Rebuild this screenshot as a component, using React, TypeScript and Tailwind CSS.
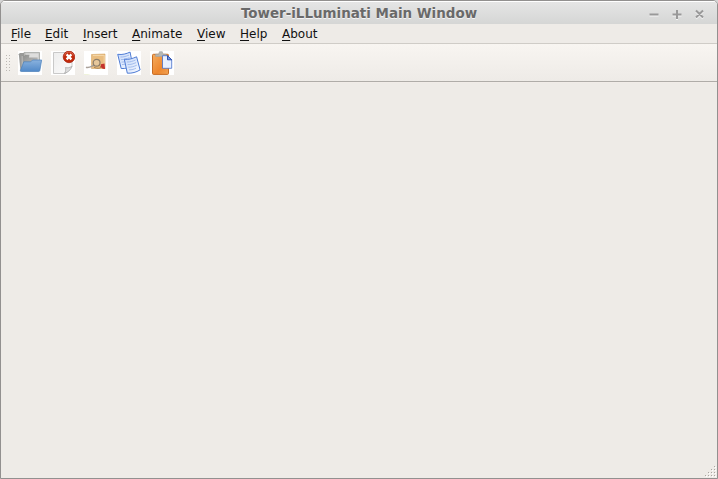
import type { ReactNode } from "react";

const menus = [
  { name: "File", width: "w-[34px]" },
  { name: "Edit", width: "w-[38px]" },
  { name: "Insert", width: "w-[49px]" },
  { name: "Animate", width: "w-[65px]" },
  { name: "View", width: "w-[43px]" },
  { name: "Help", width: "w-[42px]" },
  { name: "About", width: "w-[50px]" },
];

function Tile({ children }: { children: ReactNode }) {
  return (
    <div className="h-6 w-6 bg-white">
      <svg width="24" height="24" viewBox="0 0 24 24" className="block">
        {children}
      </svg>
    </div>
  );
}

function OpenIcon() {
  return (
    <Tile>
      <defs>
        <linearGradient id="folder" x1="0" y1="0" x2="0" y2="1">
          <stop offset="0" stopColor="#8ab2de" />
          <stop offset="1" stopColor="#5189c8" />
        </linearGradient>
        <linearGradient id="back" x1="0" y1="0" x2="1" y2="1">
          <stop offset="0" stopColor="#8c8d8b" />
          <stop offset="1" stopColor="#c9c9c8" />
        </linearGradient>
      </defs>
      <path d="M.8 3.2 1.8 2h5l1.5 1.5v16L2.5 20z" fill="#999a98" />
      <path d="M6 1.4h15.5v11H6z" fill="#c6c7c5" stroke="#989997" strokeWidth=".7" />
      <path d="M8 2.5h12.5v7H8z" fill="#dededd" />
      <path d="M4 4.8h2.5l1-1h4L11 6.5h8.7V14L4 18z" fill="url(#back)" />
      <path d="M4.2 5v12" fill="none" stroke="#d0d0cf" strokeWidth=".7" />
      <path d="M5.8 10.8h7l1.7-1.8h9.2l-1.8 10.3c-.1.7-.5 1.2-1.1 1.2H3.3c-.8 0-1-.4-.9-1z" fill="url(#folder)" stroke="#4a7fb9" strokeWidth=".7" />
    </Tile>
  );
}

function CloseFileIcon() {
  return (
    <Tile>
      <defs>
        <linearGradient id="page" x1="0" y1="0" x2="1" y2="1">
          <stop offset="0" stopColor="#ededed" />
          <stop offset="1" stopColor="#fcfcfc" />
        </linearGradient>
      </defs>
      <path d="M2.5 1.5h18.5V15.5L14.5 22.5h-12z" fill="url(#page)" stroke="#bdbdbd" strokeWidth=".8" />
      <path d="M13.5 22.3c1.5-2 1.4-4.2.9-5.8 2.2.7 4.6.1 6.4-1.2-.5 3.2-4 6.4-7.3 7z" fill="#dedede" stroke="#a3a3a3" strokeWidth=".7" />
      <circle cx="18" cy="5.9" r="5.8" fill="#c22a0b" stroke="#a51c0b" strokeWidth=".7" />
      <path d="M13.2 4.6a5 5 0 0 1 9.6 0" fill="none" stroke="#dc7864" strokeWidth=".7" />
      <path d="m15.6 3.4 4.8 5m0-5-4.8 5" stroke="#fff" strokeWidth="2.3" />
    </Tile>
  );
}

function InspectIcon() {
  return (
    <Tile>
      <path d="M7.5 3.5 21 3v14.5H7.5z" fill="#e9bd80" stroke="#d5a665" strokeWidth=".6" />
      <path d="M20.2 4v13.5M9 4.5h11" stroke="#f4d6a6" />
      <path d="M2 16.2c3.3 1.2 6-1.4 8.2-2" fill="none" stroke="#aaa19a" strokeWidth="1.6" />
      <circle cx="12.6" cy="11.8" r="3.4" fill="#e6c79b" stroke="#8c7e6a" strokeWidth="1.2" />
      <path d="M10 16.3c3.5 1.5 5.4 1.2 7 0M15 14l2 2.2" fill="none" stroke="#ae8754" />
      <path d="m16.9 13.3 3.6-.8.6 5.6-2.3-.4-2.1-1.8z" fill="#c4322c" />
      <path d="M0 23h4l3 .5H0z" fill="#dfe8b8" />
    </Tile>
  );
}

function CopyIcon() {
  return (
    <Tile>
      <defs>
        <linearGradient id="copy" x1="0" y1="0" x2="1" y2="1">
          <stop offset="0" stopColor="#c5d8fa" />
          <stop offset="1" stopColor="#f7faff" />
        </linearGradient>
      </defs>
      <path d="M.7 3.3c4.7.7 8.5-.5 12.4-2.2l2.5 13.2c-3.8 2.5-7 3.5-11.4 3.2z" fill="url(#copy)" stroke="#4f7cd4" />
      <path d="M3.5 6c3 .2 6-.8 8.5-1.9M4 8.6c3 .1 6-.9 8.5-2M4.5 11.1c2 .1 3.5-.3 5-.9M5 13.6l3-.4" fill="none" stroke="#94b1e8" strokeWidth=".8" />
      <path d="M7.3 8.2c4.9.7 8.3-.8 12.3-2.4l3.5 13.1c-4.1 2.4-7.8 3.5-12.8 3.3z" fill="url(#copy)" stroke="#4f7cd4" />
      <path d="M10 11c3 .2 6-.9 8.5-2M10.6 13.6c3 .2 6-.9 8.5-2M11.3 16.2c3 .2 6-.9 8.5-2M12 18.8c3 .2 5-.7 7-1.6" fill="none" stroke="#94b1e8" strokeWidth=".8" />
    </Tile>
  );
}

function PasteIcon() {
  return (
    <Tile>
      <defs>
        <linearGradient id="clipboard" x1="0" y1="0" x2="1" y2="1">
          <stop offset="0" stopColor="#f5ad60" />
          <stop offset=".6" stopColor="#ed872f" />
          <stop offset="1" stopColor="#f2a353" />
        </linearGradient>
      </defs>
      <rect x="2.5" y="3.3" width="16" height="20.1" rx="1" fill="url(#clipboard)" stroke="#c66c24" />
      <path d="M5.6 5.4V3.2h3L9.5.7h2.8l.7 2.5h3.2v2.2z" fill="#b5b7b5" stroke="#a0a2a0" strokeWidth=".6" />
      <path d="M12.5 4.7h5.2l4 4v8.6h-9.2z" fill="#e8f0ff" stroke="#456fca" strokeWidth=".8" />
      <path d="M17.5 4.8v4h4.2z" fill="#7b9fe8" stroke="#2146a8" strokeWidth=".9" />
    </Tile>
  );
}

function WindowControls() {
  return (
    <svg width="60" height="12" viewBox="0 0 60 12" className="mr-[10px]" fill="none" strokeWidth="2">
      <path d="M2.5 7.5h9M25.5 7.5h9M30 3v9M49 3.5l7 7m0-7-7 7" stroke="#f5f5f5" />
      <path d="M2.5 6.5h9M25.5 6.5h9M30 2v9M49 2.5l7 7m0-7-7 7" stroke="#999" />
    </svg>
  );
}

const gripDots = [0, 3, 6, 9, 12, 15];
const cornerDots = [
  [9, 0], [6, 3], [9, 3], [3, 6], [6, 6], [9, 6], [0, 9], [3, 9], [6, 9], [9, 9],
];

export default function App() {
  return (
    <div className="h-[479px] w-[718px] bg-[#d5d5d5] font-['DejaVu_Sans',sans-serif]">
      <div className="flex h-full flex-col overflow-hidden rounded-t-[5px] border border-[#92908f] bg-[#eeebe7]">
        <header className="grid h-[23px] shrink-0 grid-cols-[1fr_auto_1fr] items-center border-t border-white bg-linear-to-b from-[#e5e5e5] to-[#d5d6d5]">
          <span />
          <h1 className="pt-px text-[13.45px] leading-[22px] font-bold whitespace-nowrap text-[#696969] [text-shadow:0_1px_0_#f4f4f4]">
            Tower-iLLuminati Main Window
          </h1>
          <div className="flex justify-end">
            <WindowControls />
          </div>
        </header>
        <nav className="flex h-5 shrink-0 border-b border-[#cfccc7] pl-[10px] text-[12px] leading-5 text-[#111]">
          {menus.map(({ name, width }) => (
            <button key={name} className={`h-5 text-left leading-5 ${width}`}>
              <span className="underline decoration-1 underline-offset-2 [text-decoration-skip-ink:none]">{name[0]}</span>
              {name.slice(1)}
            </button>
          ))}
        </nav>
        <div className="flex h-[38px] shrink-0 items-center gap-1 border-b border-[#afaca8] bg-linear-to-b from-[#f8f5f1] to-[#eeebe7] pl-[5px]">
          <svg width="8" height="17" viewBox="0 0 8 17" shapeRendering="crispEdges">
            {gripDots.map((y) => (
              <g key={y} fill="#bdb9b4">
                <rect x="0" y={y + 1} width="1" height="1" />
                <rect x="3" y={y + 1} width="1" height="1" />
              </g>
            ))}
          </svg>
          <div className="flex gap-[9px]">
            <OpenIcon />
            <CloseFileIcon />
            <InspectIcon />
            <CopyIcon />
            <PasteIcon />
          </div>
        </div>
        <main className="flex min-h-0 flex-1 items-end justify-end border-t border-[#f1ece8] pr-px pb-px">
          <svg width="11" height="11" viewBox="0 0 11 11" shapeRendering="crispEdges">
            {cornerDots.map(([x, y]) => (
              <g key={`${x}-${y}`}>
                <rect x={x + 1} y={y + 1} width="1" height="1" fill="#fff" />
                <rect x={x} y={y} width="1" height="1" fill="#aaa6a1" />
              </g>
            ))}
          </svg>
        </main>
      </div>
    </div>
  );
}
